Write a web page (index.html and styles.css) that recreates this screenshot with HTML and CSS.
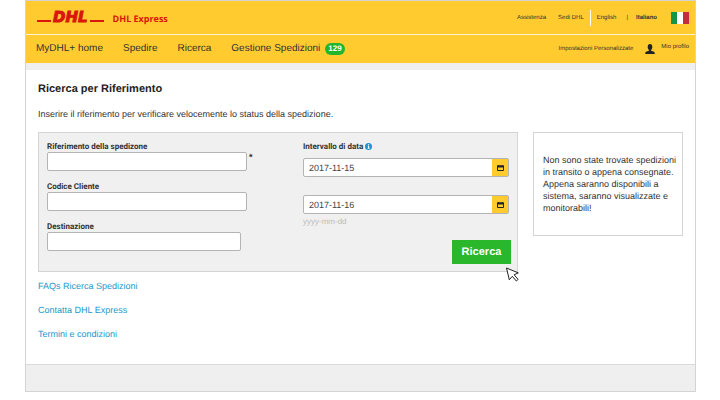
FILE: index.html
```html
<!DOCTYPE html>
<html lang="it">
<head>
  <meta charset="utf-8">
  <title>MyDHL+ - Ricerca per Riferimento</title>
  <link rel="stylesheet" href="styles.css">
</head>
<body>
  <div class="page">
    <header class="topbar">
      <a class="logo" href="#"><span class="logo-line"></span><span class="logo-text">DHL</span><span class="logo-line"></span></a>
      <span class="brand">DHL Express</span>
      <div class="top-links">
        <a href="#">Assistenza</a>
        <a href="#">Sedi DHL</a>
        <a class="lang" href="#">English</a>
        <span class="bar">|</span>
        <a class="current" href="#">Italiano</a>
        <svg class="flag" viewBox="0 0 18 12">
          <rect width="18" height="12" fill="#fff"/>
          <rect width="6" height="12" fill="#149447"/>
          <rect x="12" width="6" height="12" fill="#c62c3c"/>
        </svg>
      </div>
    </header>
    <nav class="menu">
      <a href="#">MyDHL+ home</a>
      <a href="#">Spedire</a>
      <a href="#">Ricerca</a>
      <a href="#">Gestione Spedizioni <span class="badge">129</span></a>
      <div class="profile">
        <a href="#">Impostazioni Personalizzate</a>
        <svg class="user" viewBox="0 0 10 10">
          <ellipse cx="5" cy="3" rx="2.3" ry="3" fill="#222"/>
          <path d="M3.9 5h2.2v1.7L9 7.8q.8.4.8 2.2H.2q0-1.800.8-2.200l2.900-1.100z" fill="#222"/>
        </svg>
        <a class="me" href="#">Mio profilo</a>
      </div>
    </nav>
    <main>
      <h1>Ricerca per Riferimento</h1>
      <p class="intro">Inserire il riferimento per verificare velocemente lo status della spedizione.</p>
      <div class="columns">
        <form class="search">
          <div class="fields">
            <label for="ref">Riferimento della spedizone</label>
            <div class="row"><input type="text" id="ref" required><span class="star">*</span></div>
            <label for="client">Codice Cliente</label>
            <div class="row"><input type="text" id="client"></div>
            <label for="dest">Destinazione</label>
            <div class="row"><input class="short" type="text" id="dest"></div>
          </div>
          <div class="dates">
            <label for="from">Intervallo di data
              <svg class="info" viewBox="0 0 7 7">
                <circle cx="3.500" cy="3.500" r="3.500" fill="#1b96d0"/>
                <path d="M3 1.200h1.200v1H3zM2.700 2.800h1.500v2.300h.5v.6H2.500v-.6H3V3.400h-.3z" fill="#fff"/>
              </svg>
            </label>
            <div class="date">
              <input type="text" id="from" value="2017-11-15">
              <button type="button" aria-label="Calendario"><svg viewBox="0 0 7 6"><path d="M.5 1h6v4.500h-6z" fill="none" stroke="#222"/><path d="M0 .5h7v2H0zM1.200 0h1v1h-1zM4.800 0h1v1h-1z" fill="#222"/></svg></button>
            </div>
            <div class="date">
              <input type="text" id="to" value="2017-11-16" aria-label="Data fine">
              <button type="button" aria-label="Calendario"><svg viewBox="0 0 7 6"><path d="M.5 1h6v4.500h-6z" fill="none" stroke="#222"/><path d="M0 .5h7v2H0zM1.200 0h1v1h-1zM4.800 0h1v1h-1z" fill="#222"/></svg></button>
            </div>
            <span class="hint">yyyy-mm-dd</span>
          </div>
          <button class="submit" type="submit">Ricerca</button>
          <svg class="pointer" viewBox="0 0 15 15">
            <path d="M1.500 1l2.800 11.800 3-3.500 4 4.700 1.800-1.600-4-4.600 4.200-1.900z" fill="#fff" stroke="#222" stroke-width="1"/>
          </svg>
        </form>
        <aside>Non sono state trovate spedizioni in transito o appena consegnate. Appena saranno disponibili a sistema, saranno visualizzate e monitorabili!</aside>
      </div>
      <div class="help">
        <a href="#">FAQs Ricerca Spedizioni</a>
        <a href="#">Contatta DHL Express</a>
        <a href="#">Termini e condizioni</a>
      </div>
    </main>
    <footer></footer>
  </div>
</body>
</html>
```
FILE: styles.css
```css
* { box-sizing: border-box; }
body { margin: 0; background: #fff; color: #333; font: 9px/12px "Liberation Sans", Arial, sans-serif; text-rendering: geometricPrecision; }
a { color: inherit; text-decoration: none; }
input, button { font-family: inherit; margin: 0; text-rendering: inherit; }

.page { margin: 0 24px 0 25px; border: 1px solid #d4d4d4; background: #efefef; }

.topbar { display: flex; align-items: center; height: 34px; padding: 0 6px 0 11px; background: #ffcb2f; border-bottom: 1px solid #fdf3d4; }
.logo { display: flex; align-items: flex-end; padding-bottom: 2px; color: #d9150c; }
.logo-text { font: italic bold 15px/14px "DejaVu Sans", sans-serif; margin: 0 2px; -webkit-text-stroke: 1px #d9150c; }
.logo-line { width: 14px; height: 2px; margin-bottom: 2px; background: #d9150c; }
.brand { margin-left: 9px; padding-top: 3px; color: #d9150c; font: bold 9px/12px "Open Sans", sans-serif; }
.top-links { display: flex; align-items: center; margin-left: auto; font-size: 6px; }
.top-links a { margin-right: 12px; }
.top-links .lang { margin: 0 10px 0 -6px; padding-left: 6px; border-left: 1px solid #fff; line-height: 16px; }
.top-links .bar { margin-right: 8px; }
.top-links .current { margin-right: 14px; font-weight: bold; }
.flag { width: 18px; height: 12px; }

.menu { display: flex; align-items: center; height: 28px; padding: 0 6px 0 10px; background: #ffcb2f; font-size: 10px; }
.menu > a { display: flex; align-items: center; margin-right: 20px; }
.badge { margin-left: 5px; padding: 0 3px; border-radius: 6px; background: #22b52e; color: #fff; font-size: 8px; font-weight: bold; }
.profile { display: flex; align-items: center; margin-left: auto; font-size: 6px; }
.user { width: 10px; height: 10px; margin: 0 6px 0 12px; }
.profile .me { padding-bottom: 4px; }

main { margin-top: 7px; padding: 12px 12px 24px; background: #fff; border-bottom: 1px solid #d9d9d9; }
h1 { margin: 0; color: #222; font-size: 11px; line-height: 14px; }
.intro { margin: 12px 0; }
.columns { display: flex; align-items: flex-start; gap: 15px; }

.search { position: relative; display: flex; flex: 1; height: 140px; padding: 8px; background: #f0f0f0; border: 1px solid #d4d4d4; }
.fields { width: 256px; }
label { display: block; font: bold 8px/11px Roboto, Arial, sans-serif; }
.row { display: flex; height: 29px; }
input { width: 200px; height: 19px; padding: 0 5px; border: 1px solid #b4b4b4; border-radius: 2px; background: #fff; color: #444; font-size: 9px; }
input.short { width: 194px; }
.star { margin-left: 2px; font-weight: bold; line-height: 10px; }
.info { width: 7px; height: 7px; vertical-align: -1px; }
.dates { flex: 1; }
.dates label { margin-bottom: 6px; }
.date { position: relative; margin-bottom: 18px; }
.date input { display: block; width: 206px; }
.date button { position: absolute; left: 189px; top: 1px; width: 16px; height: 17px; padding: 0; border: 0; background: #ffcb2f; line-height: 0; }
.date svg { width: 7px; height: 6px; }
.hint { display: block; margin-top: -16px; color: #bbb; font-size: 8px; }
.submit { position: absolute; right: 6px; bottom: 7px; width: 59px; height: 24px; padding: 0; border: 0; background: #2bb72b; color: #fff; font-size: 11px; font-weight: bold; }
.pointer { position: absolute; right: -3px; bottom: -11px; width: 15px; height: 15px; }

aside { width: 150px; padding: 21px 3px 21px 9px; border: 1px solid #d4d4d4; }
.help { display: flex; flex-direction: column; align-items: flex-start; gap: 12px; margin-top: 8px; }
.help a { color: #2497cb; }
footer { height: 26px; }
```
